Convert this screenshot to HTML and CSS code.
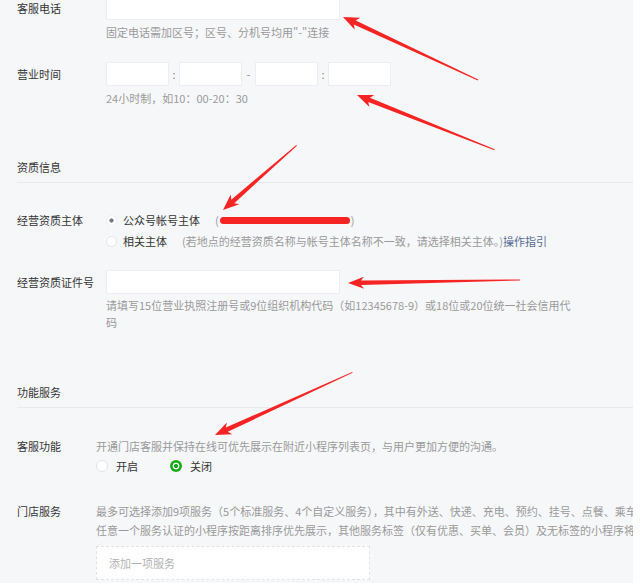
FILE: index.html
```html
<!DOCTYPE html>
<html lang="zh">
<head>
<meta charset="utf-8">
<link rel="stylesheet" href="styles.css">
</head>
<body>
<div class="page">
  <div class="row first">
    <div class="label">客服电话</div>
    <div class="field">
      <div class="input wide"></div>
      <div class="tip">固定电话需加区号；区号、分机号均用"-"连接</div>
    </div>
  </div>

  <div class="row r-time">
    <div class="label">营业时间</div>
    <div class="field">
      <div class="time">
        <div class="input t"></div><span class="sep">:</span>
        <div class="input t"></div><span class="sep dash">-</span>
        <div class="input t"></div><span class="sep">:</span>
        <div class="input t"></div>
      </div>
      <div class="tip">24小时制，如10：00-20：30</div>
    </div>
  </div>

  <div class="section">资质信息</div>

  <div class="row r-subject">
    <div class="label lh20">经营资质主体</div>
    <div class="field">
      <div class="radio-line">
        <span class="radio gray-on"></span><span class="rtext">公众号帐号主体</span>
        <span class="note">(<span class="redact"></span>)</span>
      </div>
      <div class="radio-line">
        <span class="radio"></span><span class="rtext">相关主体</span>
        <span class="note">(若地点的经营资质名称与帐号主体名称不一致，请选择相关主体。)<a class="link">操作指引</a></span>
      </div>
    </div>
  </div>

  <div class="row r-cert">
    <div class="label">经营资质证件号</div>
    <div class="field">
      <div class="input wide"></div>
      <div class="tip wrap">请填写15位营业执照注册号或9位组织机构代码（如12345678-9）或18位或20位统一社会信用代码</div>
    </div>
  </div>

  <div class="section s2">功能服务</div>

  <div class="row r-kf">
    <div class="label narrow lh19">客服功能</div>
    <div class="field">
      <div class="desc">开通门店客服并保持在线可优先展示在附近小程序列表页，与用户更加方便的沟通。</div>
      <div class="choice">
        <span class="opt"><span class="radio big"></span>开启</span>
        <span class="opt"><span class="radio big green"></span>关闭</span>
      </div>
    </div>
  </div>

  <div class="row r-store">
    <div class="label narrow lh19">门店服务</div>
    <div class="field">
      <div class="desc nowrap">最多可选择添加9项服务（5个标准服务、4个自定义服务），其中有外送、快递、充电、预约、挂号、点餐、乘车等服务标签的小程序</div>
      <div class="desc nowrap">任意一个服务认证的小程序按距离排序优先展示，其他服务标签（仅有优惠、买单、会员）及无标签的小程序将按距离排序展示。</div>
      <div class="addbox">添加一项服务</div>
    </div>
  </div>
</div>

<svg class="marks" width="642" height="583" viewBox="0 0 642 583">
  <g fill="#f72424">
    <polygon transform="translate(343 17) rotate(25)" points="0,0 16,-6.5 13,-2.3 149,-0.5 149,0.5 13,2.3 16,6.5"/>
    <polygon transform="translate(357 95) rotate(21.7)" points="0,0 16,-6.5 13,-2.3 148,-0.5 148,0.5 13,2.3 16,6.5"/>
    <polygon transform="translate(223 210) rotate(-41.3)" points="0,0 16,-6.5 13,-2.3 98,-0.5 98,0.5 13,2.3 16,6.5"/>
    <polygon transform="translate(348 283) rotate(-1)" points="0,0 16,-6 13,-2.3 172,-0.5 172,0.5 13,2.3 16,6"/>
    <polygon transform="translate(215 435) rotate(-24.5)" points="0,0 16,-6.5 13,-2.3 151,-0.5 151,0.5 13,2.3 16,6.5"/>
  </g>
</svg>
</body>
</html>
```

FILE: styles.css
```css
html, body {
  margin: 0;
  padding: 0;
  background: #ffffff;
}
body {
  font-family: "Noto Sans CJK SC", "Noto Sans", sans-serif;
  font-size: 11px;
  color: #353535;
}
.page {
  width: 633px;
  height: 587px;
  margin-top: -4px;
  padding-left: 17px;
  box-sizing: border-box;
  background: #f6f7f9;
  overflow: hidden;
}
.row {
  display: flex;
  align-items: flex-start;
}
.label {
  width: 89px;
  flex: none;
  line-height: 24px;
  color: #353535;
}
.label.narrow { width: 79px; }
.label.lh20 { line-height: 20px; }
.label.lh19 { line-height: 19px; }
.field {
  flex: 1;
  min-width: 0;
}
.input {
  background: #ffffff;
  border: 1px solid #eceef1;
  box-sizing: border-box;
  height: 24px;
}
.input.wide { width: 234px; }
.tip {
  margin-top: 4px;
  line-height: 17px;
  color: #9a9a9a;
}
.tip.wrap { width: 472px; }
.r-time { margin-top: 21px; }
.time {
  display: flex;
  align-items: center;
}
.input.t { width: 63px; }
.sep {
  width: 10px;
  text-align: center;
  color: #888;
}
.sep.dash { width: 13px; }
.section {
  margin-top: 52px;
  line-height: 17px;
  padding-bottom: 6px;
  border-bottom: 1px solid #e9eaed;
  color: #353535;
}
.section.s2 { margin-top: 53px; }
.r-subject { margin-top: 27px; }
.radio-line {
  display: flex;
  align-items: center;
  height: 20px;
  white-space: nowrap;
}
.radio-line + .radio-line { margin-top: 1px; }
.radio {
  width: 11px;
  height: 11px;
  border-radius: 50%;
  background: #fff;
  border: 1px solid #e4e5e8;
  box-sizing: border-box;
  flex: none;
  margin-right: 6px;
  display: inline-block;
}
.radio.gray-on {
  border-color: #f0f0f0;
  background: radial-gradient(circle, #7a7a7a 0 1.8px, #ffffff 2.4px);
}
.rtext { color: #353535; }
.note {
  margin-left: 15px;
  color: #9a9a9a;
  display: inline-flex;
  align-items: center;
}
.redact {
  display: inline-block;
  width: 130px;
  height: 7px;
  border-radius: 4px;
  background: #f72424;
  margin: 0 1px 0 1px;
}
.link { color: #576b95; }
.r-cert { margin-top: 19px; }
.r-cert .tip { margin-top: 3px; }
.r-kf { margin-top: 29px; }
.desc {
  line-height: 19px;
  color: #9a9a9a;
}
.desc.nowrap { white-space: nowrap; }
.choice {
  display: flex;
  height: 19px;
  align-items: center;
}
.opt {
  display: inline-flex;
  align-items: center;
  width: 74px;
}
.radio.big {
  width: 12px;
  height: 12px;
  margin-right: 8px;
}
.radio.green {
  border: none;
  background: radial-gradient(circle, #15a515 0 1.8px, #ffffff 2.3px 3.2px, #1aad19 3.7px);
}
.r-store { margin-top: 27px; }
.addbox {
  margin-top: 6px;
  width: 274px;
  height: 34px;
  box-sizing: border-box;
  border: 1px dashed #e2e3e6;
  background: #ffffff;
  padding-left: 12px;
  line-height: 32px;
  color: #b2b2b2;
}
.marks {
  position: absolute;
  top: 0;
  left: 0;
  pointer-events: none;
}
```
